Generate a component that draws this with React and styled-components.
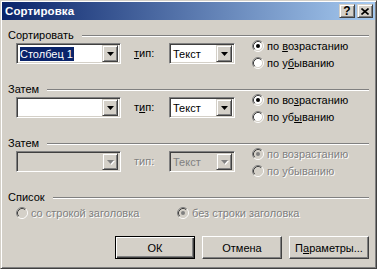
import React from 'react';
import styled, { createGlobalStyle, css } from 'styled-components';

const face = '#d4d0c8';
const shadow = '#808080';
const dark = '#404040';

const GlobalStyle = createGlobalStyle`
    html, body {
        margin: 0;
        padding: 0;
        background: ${face};
    }
    * {
        box-sizing: border-box;
    }
`

const raised = css`
    border: 1px solid;
    border-color: ${face} ${dark} ${dark} ${face};
    box-shadow: inset 1px 1px #fff, inset -1px -1px ${shadow};
`

const sunken = css`
    border: 1px solid;
    border-color: ${shadow} #fff #fff ${shadow};
    box-shadow: inset 1px 1px ${dark}, inset -1px -1px ${face};
`

const Window = styled.div`
    ${raised};
    width: 377px;
    height: 269px;
    padding: 1px;
    display: flex;
    flex-direction: column;
    background: ${face};
    font-family: "Liberation Sans", Arial, sans-serif;
    font-size: 11px;
    color: #000;
`

const TitleBar = styled.div`
    height: 18px;
    display: flex;
    align-items: center;
    padding: 0 2px 0 3px;
    background: linear-gradient(to right, #0a246a, #a6caf0);
`

const Title = styled.div`
    flex: 1;
    color: #fff;
    font-weight: bold;
    font-size: 11.5px;
    letter-spacing: 0.1px;
`

const CaptionButton = styled.div`
    ${raised};
    width: 16px;
    height: 14px;
    margin-left: ${(props) => props.$gap || 0}px;
    background: ${face};
    display: flex;
    align-items: center;
    justify-content: center;
    font-weight: bold;
    font-size: 12px;
    line-height: 12px;
`

const Body = styled.div`
    flex: 1;
    padding: 8px 6px 0 6px;
`

const Group = styled.div`
    margin-bottom: ${(props) => props.$after ?? 11}px;
`

const GroupHeader = styled.div`
    height: 13px;
    display: flex;
    align-items: center;
`

const GroupLine = styled.div`
    flex: 1;
    margin-left: 8px;
    margin-top: 2px;
    border-top: 1px solid ${shadow};
    border-bottom: 1px solid #fff;
`

const SortRow = styled.div`
    display: flex;
    align-items: flex-start;
    padding-left: 8px;
`

const Combo = styled.div`
    ${sunken};
    width: ${(props) => props.$width}px;
    height: 21px;
    margin-top: 2px;
    padding: 2px;
    display: flex;
    align-items: center;
    background: ${(props) => (props.$disabled ? face : '#fff')};
`

const ComboText = styled.div`
    flex: 1;
    padding-left: 1px;
    color: ${(props) => (props.$disabled ? shadow : '#000')};
    white-space: nowrap;
`

const Selected = styled.span`
    background: #0a246a;
    color: #fff;
    padding: 1px 1px 1px 0;
`

const DropButton = styled.div`
    ${raised};
    width: 16px;
    height: 17px;
    background: ${face};
    display: flex;
    align-items: center;
    justify-content: center;
`

const TypeLabel = styled.div`
    width: 48px;
    padding-left: 13px;
    margin-top: 2px;
    line-height: 21px;
    color: ${(props) => (props.$disabled ? shadow : '#000')};
    text-shadow: ${(props) => (props.$disabled ? '1px 1px 0 #fff' : 'none')};
`

const RadioCol = styled.div`
    margin-left: 17px;
    margin-top: -4px;
    display: flex;
    flex-direction: column;
`

const RadioItem = styled.div`
    height: 17px;
    width: ${(props) => (props.$width ? props.$width + 'px' : 'auto')};
    display: flex;
    align-items: center;
    gap: 3px;
    color: ${(props) => (props.$disabled ? shadow : '#000')};
    text-shadow: ${(props) => (props.$disabled ? '1px 1px 0 #fff' : 'none')};
    white-space: nowrap;
`

const ListRow = styled.div`
    display: flex;
    margin-top: 1px;
    padding-left: 8px;
`

const ButtonRow = styled.div`
    display: flex;
    justify-content: flex-end;
    gap: 7px;
    margin-top: 15px;
`

const PushButton = styled.div`
    width: 80px;
    height: 23px;
    display: flex;
    align-items: center;
    justify-content: center;
    background: ${face};
    ${(props) =>
        props.$default
            ? css`
                  border: 1px solid #000;
                  box-shadow: inset 1px 1px #fff, inset -1px -1px ${dark}, inset -2px -2px ${shadow};
              `
            : css`
                  border: 1px solid;
                  border-color: #fff ${dark} ${dark} #fff;
                  box-shadow: inset -1px -1px ${shadow};
              `}
`

const Arrow = ({ disabled }) => (
    <svg width="7" height="4" viewBox="0 0 7 4" style={{ overflow: 'visible' }}>
        {disabled && <path d="M1 1h7l-3.5 4z" fill="#fff" />}
        <path d="M0 0h7l-3.5 4z" fill={disabled ? shadow : '#000'} />
    </svg>
);

const RadioIcon = ({ checked, disabled }) => (
    <svg width="12" height="12" viewBox="0 0 12 12">
        <circle cx="6" cy="6" r="4.5" fill={disabled ? face : '#fff'} />
        <path d="M2.11 9.89A5.5 5.5 0 0 1 9.89 2.11" stroke={shadow} fill="none" />
        <path d="M9.89 2.11A5.5 5.5 0 0 1 2.11 9.89" stroke="#fff" fill="none" />
        <path d="M2.82 9.18A4.5 4.5 0 0 1 9.18 2.82" stroke={dark} fill="none" />
        <path d="M9.18 2.82A4.5 4.5 0 0 1 2.82 9.18" stroke={face} fill="none" />
        {checked && <circle cx="6" cy="6" r="2" fill={disabled ? shadow : '#000'} />}
    </svg>
);

const Radio = ({ checked, disabled, width, children }) => (
    <RadioItem $disabled={disabled} $width={width}>
        <RadioIcon checked={checked} disabled={disabled} />
        <span>{children}</span>
    </RadioItem>
);

const SortGroup = ({ label, column, keys, disabled }) => (
    <Group>
        <GroupHeader>
            <span>{label}</span>
            <GroupLine />
        </GroupHeader>
        <SortRow>
            <Combo $width={105} $disabled={disabled}>
                <ComboText>{column}</ComboText>
                <DropButton>
                    <Arrow disabled={disabled} />
                </DropButton>
            </Combo>
            <TypeLabel $disabled={disabled}>{keys.type}</TypeLabel>
            <Combo $width={66} $disabled={disabled}>
                <ComboText $disabled={disabled}>Текст</ComboText>
                <DropButton>
                    <Arrow disabled={disabled} />
                </DropButton>
            </Combo>
            <RadioCol>
                <Radio checked disabled={disabled}>{keys.asc}</Radio>
                <Radio disabled={disabled}>{keys.desc}</Radio>
            </RadioCol>
        </SortRow>
    </Group>
);

const App = () => (
    <>
        <GlobalStyle />
        <Window>
            <TitleBar>
                <Title>Сортировка</Title>
                <CaptionButton>?</CaptionButton>
                <CaptionButton $gap={2}>
                    <svg width="8" height="7" viewBox="0 0 8 7">
                        <path d="M0.5 0.5l7 6M7.5 0.5l-7 6" stroke="#000" strokeWidth="1.6" />
                    </svg>
                </CaptionButton>
            </TitleBar>
            <Body>
                <SortGroup
                    label="Сортировать"
                    column={<Selected>Столбец 1</Selected>}
                    keys={{
                        type: <><u>т</u>ип:</>,
                        asc: <>по <u>в</u>озрастанию</>,
                        desc: <>по у<u>б</u>ыванию</>,
                    }}
                />
                <SortGroup
                    label="Затем"
                    column=""
                    keys={{
                        type: <>т<u>и</u>п:</>,
                        asc: <>по во<u>з</u>растанию</>,
                        desc: <>по уб<u>ы</u>ванию</>,
                    }}
                />
                <SortGroup
                    label="Затем"
                    column=""
                    disabled
                    keys={{
                        type: 'тип:',
                        asc: 'по возрастанию',
                        desc: 'по убыванию',
                    }}
                />
                <Group $after={0}>
                    <GroupHeader>
                        <span>Список</span>
                        <GroupLine />
                    </GroupHeader>
                    <ListRow>
                        <Radio disabled width={161}>со строкой заголовка</Radio>
                        <Radio disabled checked>без строки заголовка</Radio>
                    </ListRow>
                </Group>
                <ButtonRow>
                    <PushButton $default>ОК</PushButton>
                    <PushButton>Отмена</PushButton>
                    <PushButton><span>П<u>а</u>раметры...</span></PushButton>
                </ButtonRow>
            </Body>
        </Window>
    </>
);

export default App;
